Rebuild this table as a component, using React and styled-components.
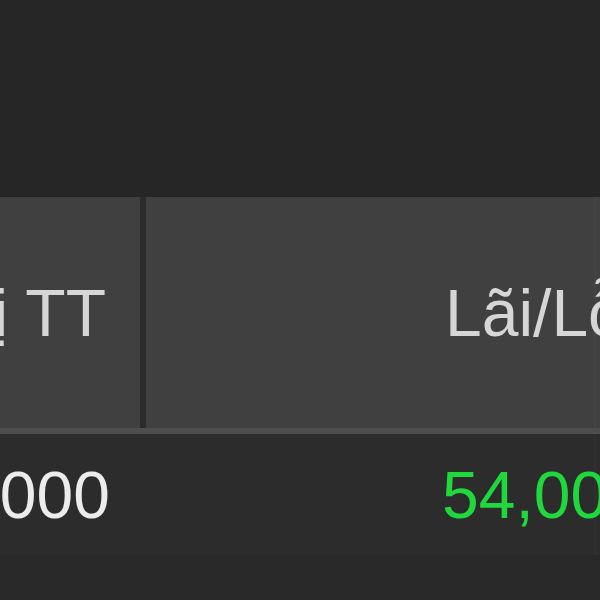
import React from 'react'
import styled, { createGlobalStyle } from 'styled-components'

const Global = createGlobalStyle`
  html, body {
    margin: 0;
    padding: 0;
    background: #262626;
  }
`

const Page = styled.div`
  width: 600px;
  height: 600px;
  overflow: hidden;
  background: #262626;
  display: flex;
  flex-direction: column;
  font-family: "Liberation Sans", Arial, sans-serif;
`

const Toolbar = styled.div`
  height: 197px;
  flex-shrink: 0;
  background: #262626;
`

const Row = styled.div`
  display: flex;
  flex-shrink: 0;
  height: ${p => p.h}px;
  background: ${p => p.bg};
  border-bottom: ${p => (p.line ? `6px solid ${p.line}` : 'none')};
`

const Cell = styled.div`
  width: ${p => p.w}px;
  flex-shrink: 0;
  display: flex;
  align-items: center;
  justify-content: ${p => (p.right ? 'flex-end' : 'flex-start')};
  padding: ${p => p.pad};
  box-sizing: border-box;
  white-space: nowrap;
  font-size: 66px;
  color: ${p => p.color || '#d6d6d6'};
  border-right: ${p => (p.divider ? `${p.dw || 6}px solid ${p.divider}` : 'none')};
`

const Footer = styled.div`
  flex: 1;
  background: #292929;
`

export default function App() {
  return (
    <Page>
      <Global />
      <Toolbar />
      <Row h={231} bg="#404040" line="#4e4e4e">
        <Cell w={146} right pad="0 34px 0 0" divider="#2b2b2b">Giá trị TT</Cell>
        <Cell w={450} pad="0 0 0 299px" divider="#444444" dw={2}>Lãi/Lỗ</Cell>
      </Row>
      <Row h={121} bg="#2c2c2c">
        <Cell w={146} right pad="0 36px 0 0" color="#ececec">1,000,000</Cell>
        <Cell w={450} pad="0 0 0 296px" color="#1fd83c" divider="#303030" dw={2}>54,000</Cell>
      </Row>
      <Footer />
    </Page>
  )
}
